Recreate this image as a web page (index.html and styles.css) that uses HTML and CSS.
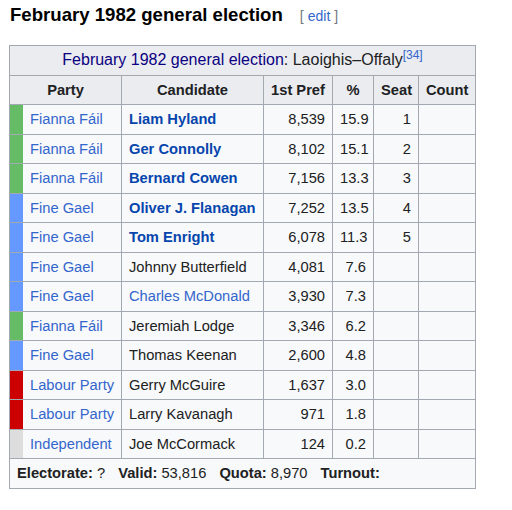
FILE: index.html
```html
<!DOCTYPE html>
<html lang="en">
<head>
<meta charset="utf-8">
<title>February 1982 general election</title>
<link rel="stylesheet" href="styles.css">
</head>
<body>
<div class="page">
  <h3 class="heading">February 1982 general election<span class="edit"><span class="br">[</span><a href="#">edit</a><span class="br">]</span></span></h3>
  <table class="wikitable">
    <colgroup>
      <col class="c-strip"><col class="c-party"><col class="c-cand"><col class="c-pref"><col class="c-pct"><col class="c-seat"><col class="c-count">
    </colgroup>
    <tr><th colspan="7" class="cap"><a href="#" class="visited">February 1982 general election</a>: Laoighis–Offaly<sup><a href="#" class="ref">[34]</a></sup></th></tr>
    <tr><th colspan="2">Party</th><th>Candidate</th><th>1st Pref</th><th>%</th><th>Seat</th><th>Count</th></tr>
    <tr><td class="strip ff"></td><td><a href="#" class="pl">Fianna Fáil</a></td><td><a href="#" class="cl">Liam Hyland</a></td><td class="num">8,539</td><td class="num">15.9</td><td class="num">1</td><td></td></tr>
    <tr><td class="strip ff"></td><td><a href="#" class="pl">Fianna Fáil</a></td><td><a href="#" class="cl">Ger Connolly</a></td><td class="num">8,102</td><td class="num">15.1</td><td class="num">2</td><td></td></tr>
    <tr><td class="strip ff"></td><td><a href="#" class="pl">Fianna Fáil</a></td><td><a href="#" class="cl">Bernard Cowen</a></td><td class="num">7,156</td><td class="num">13.3</td><td class="num">3</td><td></td></tr>
    <tr><td class="strip fg"></td><td><a href="#" class="pl">Fine Gael</a></td><td><a href="#" class="cl">Oliver J. Flanagan</a></td><td class="num">7,252</td><td class="num">13.5</td><td class="num">4</td><td></td></tr>
    <tr><td class="strip fg"></td><td><a href="#" class="pl">Fine Gael</a></td><td><a href="#" class="cl">Tom Enright</a></td><td class="num">6,078</td><td class="num">11.3</td><td class="num">5</td><td></td></tr>
    <tr><td class="strip fg"></td><td><a href="#" class="pl">Fine Gael</a></td><td>Johnny Butterfield</td><td class="num">4,081</td><td class="num">7.6</td><td></td><td></td></tr>
    <tr><td class="strip fg"></td><td><a href="#" class="pl">Fine Gael</a></td><td><a href="#" class="pl">Charles McDonald</a></td><td class="num">3,930</td><td class="num">7.3</td><td></td><td></td></tr>
    <tr><td class="strip ff"></td><td><a href="#" class="pl">Fianna Fáil</a></td><td>Jeremiah Lodge</td><td class="num">3,346</td><td class="num">6.2</td><td></td><td></td></tr>
    <tr><td class="strip fg"></td><td><a href="#" class="pl">Fine Gael</a></td><td>Thomas Keenan</td><td class="num">2,600</td><td class="num">4.8</td><td></td><td></td></tr>
    <tr><td class="strip lab"></td><td><a href="#" class="pl">Labour Party</a></td><td>Gerry McGuire</td><td class="num">1,637</td><td class="num">3.0</td><td></td><td></td></tr>
    <tr><td class="strip lab"></td><td><a href="#" class="pl">Labour Party</a></td><td>Larry Kavanagh</td><td class="num">971</td><td class="num">1.8</td><td></td><td></td></tr>
    <tr><td class="strip ind"></td><td><a href="#" class="pl">Independent</a></td><td>Joe McCormack</td><td class="num">124</td><td class="num">0.2</td><td></td><td></td></tr>
    <tr><td colspan="7" class="foot"><span class="stat"><b>Electorate:</b> ?</span><span class="stat"><b>Valid:</b> 53,816</span><span class="stat"><b>Quota:</b> 8,970</span><span class="stat"><b>Turnout:</b></span></td></tr>
  </table>
</div>
</body>
</html>
```
FILE: styles.css
```css
html, body {
  margin: 0;
  padding: 0;
  background: #ffffff;
}

.page {
  padding: 0 9px;
  font-family: "Liberation Sans", Arial, sans-serif;
  color: #202122;
}

.heading {
  margin: 3px 0 0 1px;
  font-size: 18.6px;
  line-height: 23px;
  font-weight: bold;
  color: #000000;
}

.edit {
  font-size: 14px;
  font-weight: normal;
  margin-left: 17px;
  color: #54595d;
}

.edit .br {
  color: #72777d;
}

.edit a {
  color: #3366cc;
  text-decoration: none;
  margin: 0 4px;
}

.wikitable {
  margin-top: 17px;
  border-collapse: collapse;
  table-layout: fixed;
  width: 466px;
  font-size: 14.7px;
  line-height: 22.5px;
  background: #f8f9fa;
  border: 1px solid #a2a9b1;
}

.c-strip { width: 13px; }
.c-party { width: 99px; }
.c-cand { width: 142px; }
.c-pref { width: 69px; }
.c-pct { width: 41px; }
.c-seat { width: 45px; }
.c-count { width: 57px; }

.wikitable th,
.wikitable td {
  border: 1px solid #a2a9b1;
  padding: 3px 7px;
  white-space: nowrap;
  overflow: hidden;
}

.wikitable th {
  background: #eaecf0;
  text-align: center;
  font-weight: bold;
}

.wikitable th.cap {
  font-weight: normal;
  font-size: 16px;
}

.wikitable a {
  text-decoration: none;
}

.visited {
  color: #0b0080;
}

.ref {
  color: #3366cc;
}

sup {
  font-size: 12px;
  line-height: 1;
  vertical-align: 6px;
}

.pl {
  color: #3366cc;
}

.cl {
  color: #0645ad;
  font-weight: bold;
}

.num {
  text-align: right;
}

.wikitable td.strip {
  padding: 0;
}

.ff { background: #66bb66; border-right-color: #66bb66 !important; }
.fg { background: #6699ff; border-right-color: #6699ff !important; }
.lab { background: #cc0000; border-right-color: #cc0000 !important; }
.ind { background: #dddddd; border-right-color: #dddddd !important; }

.wikitable td.foot {
  text-align: left;
}

.stat {
  margin-right: 13px;
}
```
